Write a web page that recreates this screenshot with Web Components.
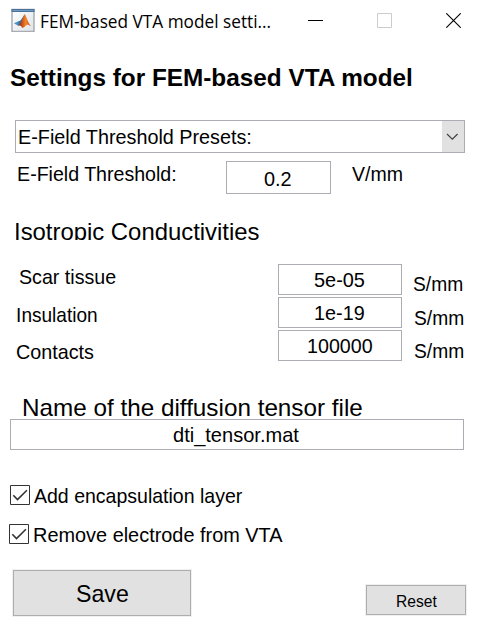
<!DOCTYPE html>
<html lang="en">
<head>
<meta charset="utf-8">
<title>FEM-based VTA model settings</title>
<style>
  body { margin: 0; background: #fff; color: #000; font-family: "Liberation Sans", Arial, sans-serif; }
</style>
</head>
<body>
<vta-settings></vta-settings>
<script>
const define = (name, html, setup) => {
  const template = document.createElement('template');
  template.innerHTML = html;
  customElements.define(name, class extends HTMLElement {
    constructor() {
      super();
      this.attachShadow({ mode: 'open' }).append(template.content.cloneNode(true));
    }
    connectedCallback() { if (setup) setup(this, this.shadowRoot); }
  });
};

// A line of text condensed or widened to occupy the width given in "w".
const pen = document.createElement('canvas').getContext('2d');
define('ui-label', `
  <style>
    :host { display: block; flex: none; font-size: 21px; line-height: 23px; height: 24px; }
    :host([kind="large"]), :host([kind="bold"]) { font-size: 24px; line-height: 27px; height: 27px; }
    :host([kind="bold"]) { font-weight: bold; }
    :host([kind="small"]) { font-size: 17px; line-height: 19px; height: 19px; }
    :host([kind="title"]) { font: 17.5px/24px "Open Sans", sans-serif; }
    :host([clip]) { height: 22px; overflow: hidden; }
    span { display: block; width: max-content; white-space: pre; transform-origin: 0 0; }
  </style><span></span>`, (host, root) => {
  const span = root.querySelector('span');
  const text = host.getAttribute('text');
  const width = +host.getAttribute('w');
  span.textContent = text;
  const style = getComputedStyle(host);
  pen.font = `${style.fontWeight} ${style.fontSize} ${style.fontFamily}`;
  const m = pen.measureText(text);
  const scale = width / (m.actualBoundingBoxLeft + m.actualBoundingBoxRight);
  host.style.width = width + 'px';
  span.style.transform = `translateX(${m.actualBoundingBoxLeft * scale}px) scaleX(${scale})`;
});

define('ui-field', `
  <style>
    :host { box-sizing: border-box; display: flex; flex: none; justify-content: center; border: 1px solid #abadb3; background: #fff; height: 31px; padding-top: 3px; }
  </style><slot></slot>`);

define('ui-select', `
  <style>
    :host { box-sizing: border-box; display: flex; justify-content: space-between; width: 450px; height: 33px; border: 1px solid #abadb3; }
    ::slotted(ui-label) { margin: 4px 0 0 3px; }
    i { width: 22px; background: #e1e1e1; display: grid; place-items: center; }
    svg { display: block; }
  </style><slot></slot>
  <i><svg width="22" height="31" fill="none" stroke="#404040" stroke-width="1.2"><path d="M5 13l5.3 5.2L15.600 13"/></svg></i>`);

define('ui-check', `
  <style>
    :host { display: flex; align-items: flex-start; }
    svg { display: block; flex: none; }
  </style>
  <svg width="20" height="20" fill="none" stroke="#333"><path d="M.5 .5h19v19H.5z"/><path d="M3.300 10.300l4.200 4.200L16.900 5.300" stroke-width="1.6"/></svg>
  <slot></slot>`);

define('ui-button', `
  <style>
    :host { box-sizing: border-box; display: flex; flex: none; justify-content: center; border: 1px solid #adadad; background: #e1e1e1; box-shadow: 0 0 0 1px #f0f0f0; }
  </style><slot></slot>`);

define('matlab-icon', `
  <style>:host { display: block; flex: none; width: 24px; height: 24px; } svg { display: block; }</style>
  <svg width="24" height="24" viewBox="0 0 24 24">
    <defs>
      <linearGradient id="bg" x2="1" y2="1"><stop stop-color="#fff"/><stop offset="1" stop-color="#dfe3e8"/></linearGradient>
      <linearGradient id="fire"><stop stop-color="#7d2016"/><stop offset=".45" stop-color="#e5651c"/><stop offset=".6" stop-color="#f28a2c"/><stop offset="1" stop-color="#b83a15"/></linearGradient>
    </defs>
    <path d="M1 1.500h22v22H1z" fill="url(#bg)" stroke="#a9adb2" stroke-width="1.500"/>
    <path d="M.5 1h23v3H.5z" fill="#4a7099"/><path d="M1.500 2h21v1h-21z" fill="#6d9bc7"/>
    <path d="M3 15.300l5-2.200 2.600.5-3.600 4.200z" fill="#4a91c4"/>
    <path d="M8 13.100c2-.3 3.200-3.300 5.500-6.700l-1 6.700-3.600 4-1.900.7z" fill="#3c6b9c"/>
    <path d="M7 17.800c2.500-.8 3.400-5 6.700-11.800 2 2.600 3 8.600 6.300 12.200-2-1.500-3.100-2-4.500-1.100-1.600 1.300-2.400 2.700-4.400 3-.6-2-1.500-3-4.100-2.300z" fill="url(#fire)"/>
  </svg>`);

define('title-bar', `
  <style>
    :host { display: flex; height: 32px; padding: 8px 26px 0 11px; }
    ui-label { margin: 1px 0 0 6px; }
    .controls { margin: 5px 0 0 auto; display: flex; gap: 54px; height: 15px; }
    svg { display: block; }
  </style>
  <matlab-icon></matlab-icon>
  <ui-label kind="title" w="229.500" text="FEM-based VTA model setti..."></ui-label>
  <div class="controls">
    <svg width="15" height="15" stroke="#000"><path d="M0 7.500h15"/></svg>
    <svg width="15" height="15" stroke="#ccc" fill="none"><path d="M.5 .5h14v14H.5z"/></svg>
    <svg width="15" height="15" stroke="#000" stroke-width="1.100"><path d="M.3 .3l14.400 14.400M14.700 .3L.3 14.700"/></svg>
  </div>`);

define('vta-settings', `
  <style>
    :host { display: flex; flex-direction: column; width: 487px; height: 627px; overflow: hidden; }
    .heading { margin: 24px 0 0 9.500px; }
    ui-select { margin: 29px 0 0 15px; }
    .threshold { display: flex; margin: 8px 0 0 18px; height: 33px; }
    .threshold > ui-label { margin-top: 1px; }
    .threshold ui-field { margin: 0 21px 0 50.700px; width: 105px; height: 33px; padding: 5px 2px 0 0; }
    .iso { margin: 24px 0 0 15.500px; }
    .grid { display: grid; grid-template-columns: 261px 124px 1fr; grid-auto-rows: 31px; margin: 24px 0 0 17px; row-gap: 2px; }
    .grid > ui-field { padding-right: 1px; }
    .grid > ui-label.unit { margin: 9px 0 0 12.300px; }
    .file { margin: 33px 0 0 23px; height: 25px; }
    .path { width: 454px; margin-left: 10px; padding-right: 2px; }
    ui-check { height: 20px; }
    ui-check ui-label { margin-top: -1px; }
    .foot { display: flex; justify-content: space-between; margin: 26px 21px 0 13px; }
  </style>
  <title-bar></title-bar>
  <ui-label class="heading" kind="bold" w="402" text="Settings for FEM-based VTA model"></ui-label>
  <ui-select><ui-label w="231.500" text="E-Field Threshold Presets:"></ui-label></ui-select>
  <div class="threshold">
    <ui-label w="157.300" text="E-Field Threshold:"></ui-label>
    <ui-field><ui-label w="27" text="0.2"></ui-label></ui-field>
    <ui-label w="50.500" text="V/mm"></ui-label>
  </div>
  <ui-label class="iso" kind="large" clip w="243.500" text="Isotropic Conductivities"></ui-label>
  <div class="grid">
    <ui-label style="margin:1px 0 0 1.500px" w="96.500" text="Scar tissue"></ui-label>
    <ui-field><ui-label w="50.300" text="5e-05"></ui-label></ui-field>
    <ui-label class="unit" style="margin:8px 0 0 11.300px" w="49.700" text="S/mm"></ui-label>
    <ui-label style="margin:6px 0 0 -.5px" w="80" text="Insulation"></ui-label>
    <ui-field><ui-label w="49" text="1e-19"></ui-label></ui-field>
    <ui-label class="unit" w="49.700" text="S/mm"></ui-label>
    <ui-label style="margin:10px 0 0 -.5px" w="76.500" text="Contacts"></ui-label>
    <ui-field><ui-label w="64" text="100000"></ui-label></ui-field>
    <ui-label class="unit" w="49.700" text="S/mm"></ui-label>
  </div>
  <ui-label class="file" kind="large" w="339.500" text="Name of the diffusion tensor file"></ui-label>
  <ui-field class="path"><ui-label w="126" text="dti_tensor.mat"></ui-label></ui-field>
  <ui-check style="margin:35px 0 0 10px"><ui-label style="margin-left:4.300px" w="208.300" text="Add encapsulation layer"></ui-label></ui-check>
  <ui-check style="margin:19px 0 0 9px"><ui-label style="margin-left:5px" w="248.500" text="Remove electrode from VTA"></ui-label></ui-check>
  <div class="foot">
    <ui-button style="width:178px;height:46px;padding:9px 0 0 2px"><ui-label kind="large" w="51.500" text="Save"></ui-label></ui-button>
    <ui-button style="width:100px;height:30px;padding:6px 0 0 2px;margin-top:15px"><ui-label kind="small" w="40" text="Reset"></ui-label></ui-button>
  </div>`);
</script>
</body>
</html>
